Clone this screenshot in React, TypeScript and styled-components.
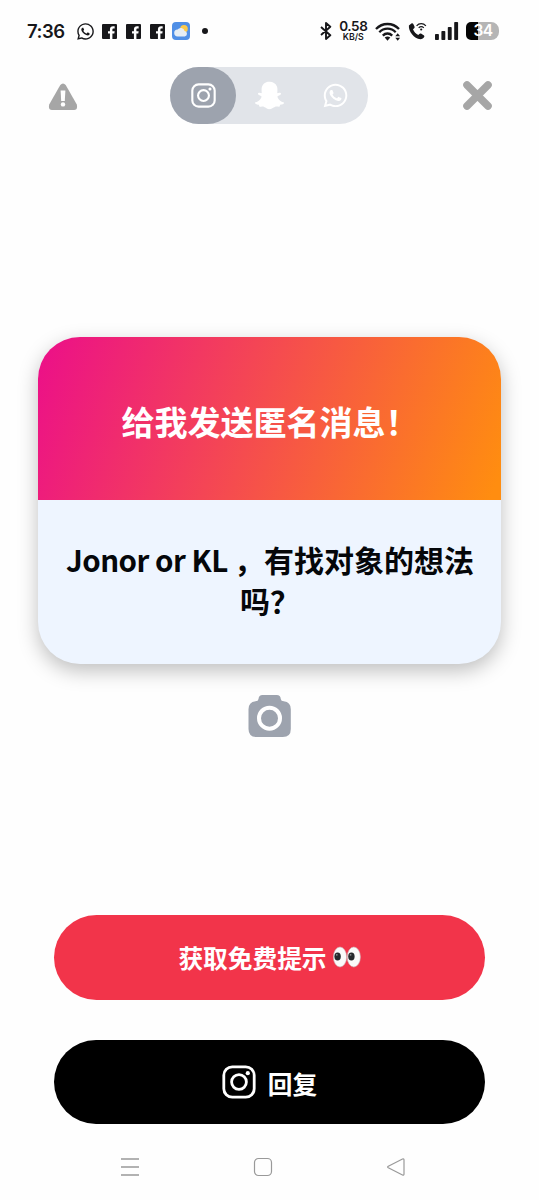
import React from 'react';
import styled, { createGlobalStyle } from 'styled-components';
import { FaWhatsapp, FaSnapchatGhost } from 'react-icons/fa';

const GlobalStyle = createGlobalStyle`
  * { box-sizing: border-box; }
  body { margin: 0; background: #fefefe; }
`;

const Screen = styled.div`
  width: 539px;
  height: 1200px;
  overflow: hidden;
  display: flex;
  flex-direction: column;
  align-items: center;
  background: #fefefe;
  font-family: 'Noto Sans CJK SC', sans-serif;
  svg { display: block; flex: none; }
`;

const StatusBar = styled.div`
  width: 100%;
  height: 62px;
  flex: none;
  display: flex;
  align-items: center;
  justify-content: space-between;
  padding: 0 40px 0 27px;
  color: #17171a;
`;

const StatusGroup = styled.div<{ $gap: number }>`
  display: flex;
  align-items: center;
  gap: ${({ $gap }) => $gap}px;
`;

const Clock = styled.span`
  width: 40px;
  font: 600 18.5px/22px Inter, sans-serif;
  letter-spacing: -0.5px;
  white-space: nowrap;
`;

const Notifications = styled(StatusGroup)`
  margin-left: 9px;
  > :first-child { margin-right: -2px; }
  > :nth-child(5) { margin-left: -2px; }
`;

const Dot = styled.span`
  width: 6px;
  height: 6px;
  margin-left: 3px;
  border-radius: 50%;
  background: #17171a;
`;

const Speed = styled.div`
  width: 29px;
  display: flex;
  flex-direction: column;
  align-items: center;
  font-family: Inter, sans-serif;
  font-weight: 600;
  white-space: nowrap;
`;

const SpeedValue = styled.div`
  font-size: 13.5px;
  line-height: 11px;
  letter-spacing: -0.4px;
`;

const SpeedUnit = styled.div`
  font-size: 8.8px;
  line-height: 9px;
`;

const Battery = styled.div`
  width: 33px;
  height: 18px;
  display: flex;
  align-items: center;
  justify-content: center;
  padding-left: 1px;
  border-radius: 5px 8px 8px 5px;
  background: linear-gradient(90deg, #050505 0 12px, #b5b5b5 12px);
  color: #fff;
  font: 600 15.5px/18px Inter, sans-serif;
  letter-spacing: -0.6px;
`;

const Header = styled.header`
  width: 100%;
  height: 57px;
  margin-top: 4.5px;
  flex: none;
  display: flex;
  align-items: center;
  justify-content: space-between;
  padding: 0 46px 0 48px;
`;

const Switcher = styled.div`
  width: 198px;
  height: 57px;
  margin-left: -2px;
  display: flex;
  border-radius: 29px;
  background: #e1e4e9;
`;

const Channel = styled.button<{ $active?: boolean }>`
  flex: 1;
  display: flex;
  align-items: center;
  justify-content: center;
  border: 0;
  padding: 0;
  border-radius: 29px;
  background: ${({ $active }) => ($active ? '#9da3ae' : 'transparent')};
  color: #fff;
`;

const Card = styled.section`
  width: 463px;
  height: 326.5px;
  margin-top: 213.5px;
  flex: none;
  border-radius: 42px;
  overflow: hidden;
  background: #eef5ff;
  box-shadow: 0 7px 20px rgba(0, 0, 0, 0.25);
`;

const CardTitle = styled.h1`
  height: 163px;
  margin: 0;
  padding: 4px 0 0 1px;
  display: flex;
  align-items: center;
  justify-content: center;
  background: linear-gradient(110deg, #ec1187 2%, #ff8d10 98%);
  color: #fff;
  font-size: 33px;
  font-weight: 700;
  white-space: nowrap;
`;

const Message = styled.p`
  height: 163px;
  margin: 0;
  padding: 39px 0 0 1px;
  color: #05070a;
  font-size: 30px;
  line-height: 41px;
  font-weight: 600;
  text-align: center;
  white-space: nowrap;
`;

const Latin = styled.span`
  font-size: 29.5px;
  line-height: 1;
  letter-spacing: -0.5px;
`;

const CameraButton = styled.button`
  margin: 31.5px 0 0;
  padding: 0;
  border: 0;
  background: none;
`;

const Actions = styled.div`
  width: 431px;
  margin-top: 178px;
  display: flex;
  flex-direction: column;
  gap: 40px;
`;

const ActionButton = styled.button<{ $color: string; $gap: number }>`
  height: 84.5px;
  display: flex;
  align-items: center;
  justify-content: center;
  gap: ${({ $gap }) => $gap}px;
  padding: 0;
  border: 0;
  border-radius: 43px;
  background: ${({ $color }) => $color};
  color: #fff;
  font-family: inherit;
  font-size: 24.7px;
  font-weight: 700;
  white-space: nowrap;
`;

const ActionLabel = styled.span<{ $shift: number }>`
  padding-top: ${({ $shift }) => $shift}px;
  line-height: 36px;
`;

const NavBar = styled.nav`
  width: 100%;
  height: 24px;
  margin-top: 31px;
  display: flex;
  align-items: center;
  justify-content: space-between;
  padding: 0 133px 0 120px;
`;

const InstagramIcon = ({ size, stroke }: { size: number; stroke: number }) => (
  <svg width={size} height={size} viewBox="0 0 34 34" fill="none" stroke="#fff" strokeWidth={stroke}>
    <rect x="1.8" y="1.8" width="30.4" height="30.4" rx="8.5" />
    <circle cx="17" cy="17" r="7.4" />
    <circle cx="25.8" cy="8.2" r="2.1" fill="#fff" stroke="none" />
  </svg>
);

const FacebookIcon = () => (
  <svg width="15" height="15" viewBox="0 0 14 14">
    <rect width="14" height="14" rx="1" fill="#17171a" />
    <path d="M7.4 14V8.8H5.6V6.7H7.4V5.1C7.4 3.2 8.6 2.2 10.3 2.2H11.8V4.2H10.8C10 4.2 9.7 4.6 9.7 5.3V6.7H11.8L11.5 8.8H9.7V14Z" fill="#fff" />
  </svg>
);

const WeatherIcon = () => (
  <svg width="18" height="18" viewBox="0 0 18 18">
    <rect width="18" height="18" rx="4" fill="#4f8fe6" />
    <circle cx="12" cy="6.8" r="3.8" fill="#fbc94a" />
    <path d="M5.8 14.5a3.5 3.5 0 0 1-.2-7 4 4 0 0 1 7 1.5 2.8 2.8 0 0 1 .2 5.5Z" fill="#e5edf4" />
  </svg>
);

const BluetoothIcon = () => (
  <svg width="12" height="18" viewBox="0 0 12 18" fill="none" stroke="#17171a" strokeWidth="1.9" strokeLinejoin="round">
    <path d="M1 5l9.300 8.300L6 17V1l4.300 3.700L1 13" />
  </svg>
);

const WifiIcon = () => (
  <svg width="26" height="19" viewBox="0 0 26 19" fill="none" stroke="#17171a" strokeWidth="2.300">
    <path d="M1 7C7.400.3 17.600.3 24 7M4.300 10.300c4.600-4.800 11.800-4.800 16.400 0M7.800 13.600c2.700-2.800 6.700-2.800 9.400 0" />
    <path d="M9.700 15.600q2.800-2.400 5.600 0l-2.800 3.200Z" fill="#17171a" stroke="none" />
    <path d="M20.300 14.200l2.400-3 2.400 3ZM20.300 15.800l2.400 3 2.400-3Z" fill="#17171a" stroke="none" />
  </svg>
);

const CallIcon = () => (
  <svg width="19" height="18" viewBox="0 0 19 18">
    <path d="M3.400 1.600.9 3.400C.3 8.800 6 16.800 12.400 17.200c1.700 0 3.200-.8 3.900-2.400.2-.7-.1-1.200-.6-1.600l-2.700-1.600c-.7-.4-1.300-.1-1.700.4l-1 1C8 12 5.900 9.500 5 7.200l1.200-1c.5-.5.6-1 .3-1.700L5.300 2c-.4-.8-1.200-.9-1.900-.4Z" fill="#17171a" />
    <path d="M8.600 3.800c2.500-3 6.700-3 9.300 0M10.700 5.900c1.500-1.600 3.600-1.600 5.100 0" fill="none" stroke="#17171a" strokeWidth="1.200" />
    <circle cx="13.200" cy="7.500" r="1.100" fill="#17171a" />
  </svg>
);

const SignalIcon = () => (
  <svg width="24" height="18" viewBox="0 0 24 18" fill="#17171a">
    <rect x="0" y="12" width="3.900" height="6" rx=".8" />
    <rect x="6.400" y="9" width="3.900" height="9" rx=".8" />
    <rect x="12.800" y="5" width="3.900" height="13" rx=".8" />
    <rect x="19.200" y="0" width="3.900" height="18" rx=".8" />
  </svg>
);

const WarningIcon = () => (
  <svg width="30" height="28" viewBox="0 0 30 28" style={{ marginTop: 3 }}>
    <path d="M12.300 2Q15-1.200 17.700 2L28.800 21.500Q30 27 26 27H4Q0 27 1.200 21.500Z" fill="#a6a6a6" />
    <path d="M12.600 7.500h4.800l-.6 10.500h-3.600Z" fill="#fff" />
    <circle cx="15" cy="21.400" r="2.200" fill="#fff" />
  </svg>
);

const CloseIcon = () => (
  <svg width="31" height="31" viewBox="0 0 31 31" stroke="#a6a6a6" strokeWidth="7.600" strokeLinecap="round">
    <path d="M5 5l21 21M26 5L5 26" />
  </svg>
);

const CameraIcon = () => (
  <svg width="43" height="42" viewBox="0 0 43 42">
    <path d="M14.500 0h14.300q3.700 0 4 4 .2 2.200 3 2.200 7 .8 7 8V34q0 8-8 8H8.500q-8 0-8-8V14.200q0-7.200 7-8 2.800 0 3-2.200.3-4 4-4Z" fill="#9da3ae" />
    <circle cx="21.500" cy="23.200" r="10.500" fill="none" stroke="#fff" strokeWidth="4" />
  </svg>
);

const EyesIcon = () => (
  <svg width="28" height="22" viewBox="0 0 28 22">
    {[0, 13.8].map((x) => (
      <g key={x} transform={`translate(${x} 0)`}>
        <ellipse cx="7" cy="11" rx="6.600" ry="10" fill="#fafafa" stroke="#c9b8ba" strokeWidth=".6" />
        <ellipse cx="4.600" cy="10.500" rx="3.200" ry="4.100" fill="#26292c" />
        <circle cx="3.800" cy="8.800" r=".9" fill="#8b8e90" />
      </g>
    ))}
  </svg>
);

export default function App() {
  return (
    <Screen>
      <GlobalStyle />
      <StatusBar>
        <StatusGroup $gap={0}>
          <Clock>7:36</Clock>
          <Notifications $gap={9}>
            <FaWhatsapp size={19} />
            <FacebookIcon />
            <FacebookIcon />
            <FacebookIcon />
            <WeatherIcon />
            <Dot />
          </Notifications>
        </StatusGroup>
        <StatusGroup $gap={7.3}>
          <BluetoothIcon />
          <Speed>
            <SpeedValue>0.58</SpeedValue>
            <SpeedUnit>KB/S</SpeedUnit>
          </Speed>
          <WifiIcon />
          <CallIcon />
          <SignalIcon />
          <Battery>34</Battery>
        </StatusGroup>
      </StatusBar>
      <Header>
        <WarningIcon />
        <Switcher>
          <Channel $active aria-label="Instagram"><InstagramIcon size={25} stroke={2.9} /></Channel>
          <Channel aria-label="Snapchat"><FaSnapchatGhost size={29} /></Channel>
          <Channel aria-label="WhatsApp"><FaWhatsapp size={27} /></Channel>
        </Switcher>
        <CloseIcon />
      </Header>
      <Card>
        <CardTitle>给我发送匿名消息！</CardTitle>
        <Message>
          <Latin>Jonor or KL </Latin>，有找对象的想法<br />吗？
        </Message>
      </Card>
      <CameraButton aria-label="Camera"><CameraIcon /></CameraButton>
      <Actions>
        <ActionButton $color="#f2344a" $gap={6}>
          <ActionLabel $shift={0}>获取免费提示</ActionLabel>
          <EyesIcon />
        </ActionButton>
        <ActionButton $color="#000" $gap={12}>
          <InstagramIcon size={34} stroke={2.8} />
          <ActionLabel $shift={3}>回复</ActionLabel>
        </ActionButton>
      </Actions>
      <NavBar>
        <svg width="20" height="20" viewBox="0 0 20 20" stroke="#999" strokeWidth="1.400">
          <path d="M1 2h18M1 10h18M1 18h18" />
        </svg>
        <svg width="20" height="20" viewBox="0 0 20 20" fill="none" stroke="#999" strokeWidth="1.200">
          <rect x="1.500" y="1.500" width="17" height="17" rx="4" />
        </svg>
        <svg width="20" height="20" viewBox="0 0 20 20" fill="none" stroke="#999" strokeWidth="1.200" strokeLinejoin="round">
          <path d="M2.300 9.200 16.500 2Q18 1.400 18 3v14q0 1.600-1.500 1L2.300 10.800q-1.300-.8 0-1.600Z" />
        </svg>
      </NavBar>
    </Screen>
  );
}
